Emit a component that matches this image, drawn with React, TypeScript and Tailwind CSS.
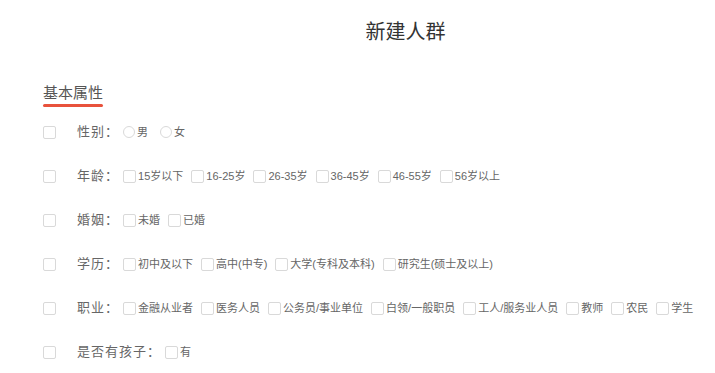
import { useState } from "react";

const rows = [
  { key: "gender", label: "性别：", type: "radio", options: ["男", "女"] },
  { key: "age", label: "年龄：", type: "check", options: ["15岁以下", "16-25岁", "26-35岁", "36-45岁", "46-55岁", "56岁以上"] },
  { key: "marry", label: "婚姻：", type: "check", options: ["未婚", "已婚"] },
  { key: "edu", label: "学历：", type: "check", options: ["初中及以下", "高中(中专)", "大学(专科及本科)", "研究生(硕士及以上)"] },
  {
    key: "job",
    label: "职业：",
    type: "check",
    options: ["金融从业者", "医务人员", "公务员/事业单位", "白领/一般职员", "工人/服务业人员", "教师", "农民", "学生"],
  },
  { key: "kid", label: "是否有孩子：", type: "check", options: ["有"] },
];

const Box = () => <span className="inline-block w-[13px] h-[13px] border border-[#d9d9d9] rounded-[2px] bg-white shrink-0" />;
const Radio = () => <span className="inline-block w-[12px] h-[12px] border border-[#d9d9d9] rounded-full bg-white shrink-0" />;

const App = () => {
  const [sel] = useState<string[]>([]);

  return (
    <div className="w-[715px] h-[373px] bg-white overflow-hidden" style={{ fontFamily: '"Liberation Sans", "Noto Sans CJK SC", sans-serif' }}>
      {/* title */}
      <div className="pt-[20px] pl-[96px] flex justify-center">
        <h1 className="text-[20px] leading-[24px] text-[#333]">新建人群</h1>
      </div>

      {/* section */}
      <div className="pl-[43px] pt-[37px]">
        <div className="inline-block">
          <p className="text-[15px] leading-[18px] text-[#555]">基本属性</p>
          <div className="h-[3px] mt-[2px] bg-[#e8523c] rounded-full" />
        </div>
      </div>

      <div className="pl-[43px] pt-[3px]">
        {rows.map((r) => (
          <div key={r.key} className="flex items-center h-[44px]">
            <Box />
            <span className="ml-[21px] text-[13px] text-[#666] tracking-[1px] whitespace-nowrap">{r.label}</span>
            <div
              className={
                "flex items-center ml-[4px] text-[11px] text-[#666] whitespace-nowrap " + (r.type === "radio" ? "gap-[12px]" : "gap-[8px]")
              }
            >
              {r.options.map((o) => (
                <label key={o} className="flex items-center gap-[2px]">
                  {r.type === "radio" ? <Radio /> : <Box />}
                  <span className={sel.includes(o) ? "text-[#333]" : ""}>{o}</span>
                </label>
              ))}
            </div>
          </div>
        ))}
      </div>
    </div>
  );
};

export default App;
